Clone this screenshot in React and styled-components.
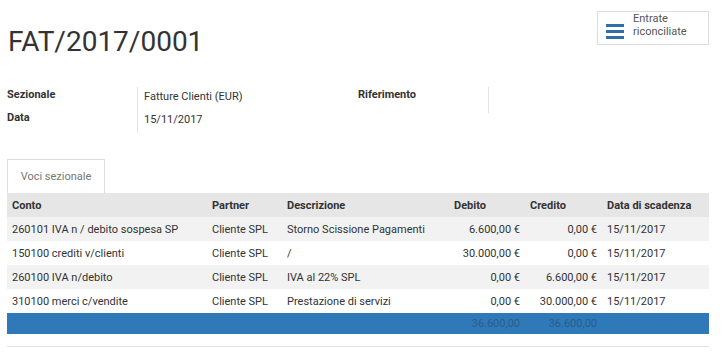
import styled, { createGlobalStyle } from "styled-components";

const GlobalStyle = createGlobalStyle`
  body {
    margin: 0;
    background: #fff;
    font-family: Roboto, "Liberation Sans", sans-serif;
    font-size: 11px;
    color: #333;
  }
`;

const Page = styled.div`
  padding: 11px 13px 0 7px;
`;

const Header = styled.div`
  display: flex;
  justify-content: space-between;
  align-items: flex-start;
`;

const Title = styled.h1`
  margin: 14px 0 0 1px;
  font-size: 28px;
  font-weight: 400;
  line-height: 34px;
  color: #333;
`;

const StatButton = styled.div`
  display: flex;
  align-items: center;
  gap: 9px;
  width: 112px;
  height: 34px;
  box-sizing: border-box;
  padding: 0 0 0 8px;
  border: 1px solid #ddd;
  background: #fff;
  color: #555;
  line-height: 13px;
  font-size: 11px;
`;

const BurgerWrap = styled.span`
  display: flex;
  margin-top: 7px;
`;

const StatText = styled.div`
  margin-top: -6px;
`;

const Fields = styled.div`
  display: grid;
  grid-template-columns: 351px 1fr;
  margin-top: 28px;
`;

const Group = styled.div`
  display: grid;
  grid-template-columns: 130px 220px;
  align-items: start;
`;

const Labels = styled.div`
  display: flex;
  flex-direction: column;
`;

const Values = styled.div`
  display: flex;
  flex-direction: column;
  border-left: 1px solid #e4e4e4;
  padding-left: 6px;
  min-height: ${(p) => p.$min}px;
`;

const Label = styled.div`
  font-weight: 700;
  height: 23px;
  line-height: 16px;
`;

const Value = styled.div`
  height: 23px;
  line-height: 16px;
  padding-top: 2px;
  box-sizing: border-box;
  color: #333;
`;

const Tabs = styled.div`
  display: flex;
  margin-top: 26px;
`;

const Tab = styled.div`
  width: 98px;
  height: 34px;
  box-sizing: border-box;
  border: 1px solid #ddd;
  border-bottom: none;
  display: flex;
  align-items: center;
  justify-content: center;
  color: #777;
  background: #fff;
`;

const Table = styled.table`
  width: 702px;
  border-collapse: collapse;
  table-layout: fixed;
`;

const Th = styled.th`
  background: #e6e6e6;
  height: 24px;
  padding: 0 5px;
  text-align: left;
  font-weight: 700;
  color: #333;
`;

const Row = styled.tr`
  background: ${(p) => (p.$odd ? "#f2f2f2" : "#fff")};
`;

const Td = styled.td`
  height: 24px;
  padding: 0 5px;
  white-space: nowrap;
  overflow: hidden;
  text-align: ${(p) => (p.$num ? "right" : "left")};
`;

const FootCell = styled.td`
  background: #2f79b9;
  height: 21px;
  padding: 0 5px;
  color: #2a5d8c;
  text-align: right;
`;

const BottomLine = styled.div`
  margin-top: 12px;
  border-top: 1px solid #e2e2e2;
  width: 702px;
`;

const Burger = () => (
  <svg width="18" height="15" viewBox="0 0 18 15">
    <rect x="0" y="0" width="18" height="3" fill="#2f6ea8" />
    <rect x="0" y="6" width="18" height="3" fill="#2f6ea8" />
    <rect x="0" y="12" width="18" height="3" fill="#2f6ea8" />
  </svg>
);

const rows = [
  ["260101 IVA n / debito sospesa SP", "Cliente SPL", "Storno Scissione Pagamenti", "6.600,00 €", "0,00 €", "15/11/2017"],
  ["150100 crediti v/clienti", "Cliente SPL", "/", "30.000,00 €", "0,00 €", "15/11/2017"],
  ["260100 IVA n/debito", "Cliente SPL", "IVA al 22% SPL", "0,00 €", "6.600,00 €", "15/11/2017"],
  ["310100 merci c/vendite", "Cliente SPL", "Prestazione di servizi", "0,00 €", "30.000,00 €", "15/11/2017"],
];

export default function App() {
  return (
    <>
      <GlobalStyle />
      <Page>
        <Header>
          <Title>FAT/2017/0001</Title>
          <StatButton>
            <BurgerWrap>
              <Burger />
            </BurgerWrap>
            <StatText>
              Entrate
              <br />
              riconciliate
            </StatText>
          </StatButton>
        </Header>

        <Fields>
          <Group>
            <Labels>
              <Label>Sezionale</Label>
              <Label>Data</Label>
            </Labels>
            <Values $min={46}>
              <Value>Fatture Clienti (EUR)</Value>
              <Value>15/11/2017</Value>
            </Values>
          </Group>
          <Group>
            <Labels>
              <Label>Riferimento</Label>
            </Labels>
            <Values $min={26} />
          </Group>
        </Fields>

        <Tabs>
          <Tab>Voci sezionale</Tab>
        </Tabs>
        <Table>
          <colgroup>
            <col style={{ width: 200 }} />
            <col style={{ width: 75 }} />
            <col style={{ width: 167 }} />
            <col style={{ width: 76 }} />
            <col style={{ width: 77 }} />
            <col style={{ width: 107 }} />
          </colgroup>
          <thead>
            <tr>
              <Th>Conto</Th>
              <Th>Partner</Th>
              <Th>Descrizione</Th>
              <Th>Debito</Th>
              <Th>Credito</Th>
              <Th>Data di scadenza</Th>
            </tr>
          </thead>
          <tbody>
            {rows.map((r, i) => (
              <Row key={i} $odd={i % 2 === 0}>
                <Td>{r[0]}</Td>
                <Td>{r[1]}</Td>
                <Td>{r[2]}</Td>
                <Td $num>{r[3]}</Td>
                <Td $num>{r[4]}</Td>
                <Td>{r[5]}</Td>
              </Row>
            ))}
          </tbody>
          <tfoot>
            <tr>
              <FootCell />
              <FootCell />
              <FootCell />
              <FootCell>36.600,00</FootCell>
              <FootCell>36.600,00</FootCell>
              <FootCell />
            </tr>
          </tfoot>
        </Table>
        <BottomLine />
      </Page>
    </>
  );
}
